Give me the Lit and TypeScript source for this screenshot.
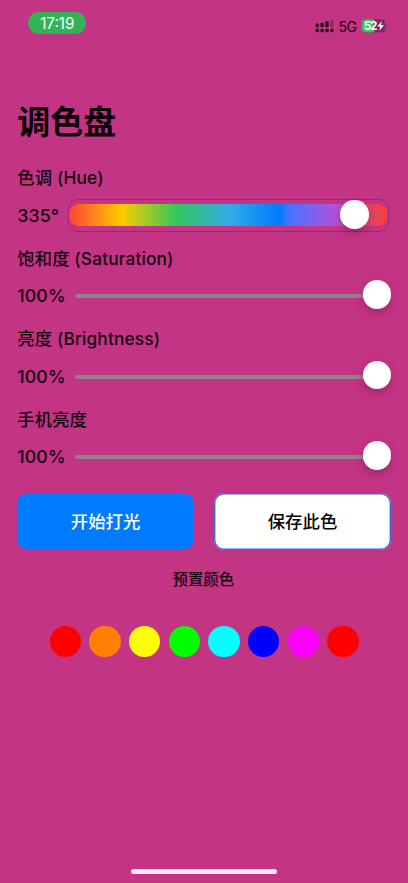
import { LitElement, html, css, svg } from "lit";
import { customElement, property } from "lit/decorators.js";
import { styleMap } from "lit/directives/style-map.js";

@customElement("status-bar")
class StatusBar extends LitElement {
  static styles = css`
    :host { display: flex; justify-content: space-between; align-items: flex-start; height: 50px; padding: 11.5px 21px 0 28.3px; box-sizing: border-box; }
    .time { width: 58px; height: 22.5px; border-radius: 12px; background: #32b355; color: #fff; font-size: 15.2px; line-height: 23px; text-align: center; font-weight: 400; }
    .right { display: flex; align-items: center; height: 14px; margin-top: 7.8px; }
    .signal { display: block; width: 19px; height: 13px; margin-top: 1px; }
    .net { font-size: 14px; font-weight: 400; line-height: 14px; margin: 1px 5px 0 5px; width: 17.5px; white-space: nowrap; letter-spacing: -0.4px; }
    .battery { display: block; width: 26px; height: 14px; }
  `;
  render() {
    const xs = [0.6, 5.5, 10.4, 15.3];
    const tops = [3.6, 2.8, 1.2, 0];
    return html`
      <div class="time">17:19</div>
      <div class="right">
        <svg class="signal" viewBox="0 0 19 13">
          ${xs.map((x, i) => svg`
            <rect x=${x} y=${tops[i]} width="3.2" height=${7.2 - tops[i]} rx="0.8" fill="#200615" opacity=${i === 3 ? 0.3 : 1}></rect>
            <rect x=${x} y="8.8" width="3.2" height="3.4" rx="1" fill="#200615"></rect>`)}
        </svg>
        <div class="net">5G</div>
        <svg class="battery" viewBox="0 0 26 14">
          <defs><clipPath id="b"><rect x="1" y="0.2" width="23.2" height="13.4" rx="4"></rect></clipPath></defs>
          <g clip-path="url(#b)">
            <rect width="25" height="14" fill="#84265f"></rect>
            <rect width="13" height="14" fill="#36c75a"></rect>
          </g>
          <path d="M24.8 4.9Q26 5.5 26 6.9T24.8 8.9Z" fill="#84265f"></path>
          <text x="2.8" y="11.1" font-family="Inter" font-size="11.8" font-weight="700" fill="#fff" textLength="13.6">52</text>
          <path d="M20.8 2.2L16.3 7.5H19.2L18.3 11.8L23 6.3H20Z" fill="#fff"></path>
        </svg>
      </div>`;
  }
}

@customElement("value-slider")
class ValueSlider extends LitElement {
  @property() label = "";
  @property() value = "";
  @property({ type: Number }) fraction = 1;
  @property({ type: Boolean }) rainbow = false;
  static styles = css`
    :host { display: block; height: 80.5px; }
    .label { height: 26px; line-height: 26px; font-size: 17.3px; font-weight: 500; letter-spacing: 0.15px; white-space: nowrap; }
    .row { display: flex; align-items: center; height: 34px; margin-top: 7.5px; }
    .value { font-size: 17.8px; font-weight: 500; letter-spacing: 0.1px; line-height: 34px; white-space: nowrap; width: 57.5px; }
    .value.hue { width: 51px; }
    .slot { position: relative; flex: 1; height: 34px; display: flex; align-items: center; }
    .slot.hue { flex: none; width: 321px; height: 33px; margin-bottom: 1.4px; box-sizing: border-box; border: 1px solid rgba(110, 20, 90, 0.45); border-radius: 10px; }
    .line { width: 100%; height: 4.2px; border-radius: 2px; background: #94818f; }
    .spectrum { width: 100%; height: 21.5px; border-radius: 10px;
      background: linear-gradient(90deg, #ff4534, #ffcc00 16.67%, #34c759 33.33%, #32ade6 50%, #007aff 66.2%, #4674ff 69%, #af52de 83.33%, #ff3b30);
      display: flex; align-items: center; justify-content: flex-end; }
    .rest { width: 23px; height: 4px; margin-right: 3px; border-radius: 2px; background: rgba(150, 115, 110, 0.3); }
    .knob { position: absolute; top: 1.2px; width: 28.6px; height: 28.6px; border-radius: 50%; background: #fff; box-shadow: 0 4px 9px rgba(50, 0, 35, 0.26); }
    .hue .knob { top: 0.8px; }
  `;
  render() {
    const hue = this.rainbow ? "hue" : "";
    const left = `calc((100% - 28.6px) * ${this.fraction})`;
    return html`
      <div class="label">${this.label}</div>
      <div class="row">
        <div class="value ${hue}">${this.value}</div>
        <div class="slot ${hue}">
          ${this.rainbow ? html`<div class="spectrum"><div class="rest"></div></div>` : html`<div class="line"></div>`}
          <div class="knob" style=${styleMap({ left })}></div>
        </div>
      </div>`;
  }
}

@customElement("app-root")
class AppRoot extends LitElement {
  static styles = css`
    :host { display: flex; flex-direction: column; width: 408px; height: 883px; overflow: hidden; box-sizing: border-box; background: #c43484; color: #16030e; font-family: Inter, "Noto Sans CJK SC", sans-serif; }
    .main { flex: 1; padding: 0 16.7px 0 17.3px; display: flex; flex-direction: column; }
    h1 { margin: 47px 0 0; height: 50px; line-height: 50px; font-size: 33px; font-weight: 700; color: #090006; }
    .sliders { margin-top: 18.2px; height: 322px; }
    .actions { display: flex; justify-content: space-between; align-items: center; height: 57px; margin-top: 5.6px; }
    button { font: 500 17.4px/1 Inter, "Noto Sans CJK SC", sans-serif; padding: 1px 0 0; box-sizing: border-box; width: 176.6px; height: 55px; border: 0; border-radius: 9px; color: #fff; background: #007aff; }
    .save { width: 177.6px; height: 56.6px; color: #000; background: #fff; box-shadow: inset 0 0 0 1.4px #3b68dc; border-radius: 10px; }
    .caption { height: 24px; line-height: 24px; margin-top: 18.4px; text-align: center; font-size: 15.4px; font-weight: 500; margin-right: 2px; }
    .presets { display: flex; justify-content: center; gap: 8.4px; margin: 33.8px 0.3px 0 0; }
    .dot { width: 31.3px; height: 31.3px; border-radius: 50%; }
    .home { width: 145.5px; height: 5.2px; border-radius: 3px; background: #f8ebf3; margin: 0 auto 8.8px; }
  `;
  render() {
    const presets = ["#ff0000", "#ff8000", "#ffff00", "#00ff00", "#00ffff", "#0000ff", "#ff00ff", "#ff0000"];
    return html`
      <status-bar></status-bar>
      <div class="main">
        <h1>调色盘</h1>
        <div class="sliders">
          <value-slider label="色调 (Hue)" value="335°" .fraction=${0.9325} rainbow></value-slider>
          <value-slider label="饱和度 (Saturation)" value="100%"></value-slider>
          <value-slider label="亮度 (Brightness)" value="100%"></value-slider>
          <value-slider label="手机亮度" value="100%"></value-slider>
        </div>
        <div class="actions">
          <button>开始打光</button>
          <button class="save">保存此色</button>
        </div>
        <div class="caption">预置颜色</div>
        <div class="presets">
          ${presets.map((c) => html`<div class="dot" style=${styleMap({ background: c })}></div>`)}
        </div>
      </div>
      <div class="home"></div>`;
  }
}
